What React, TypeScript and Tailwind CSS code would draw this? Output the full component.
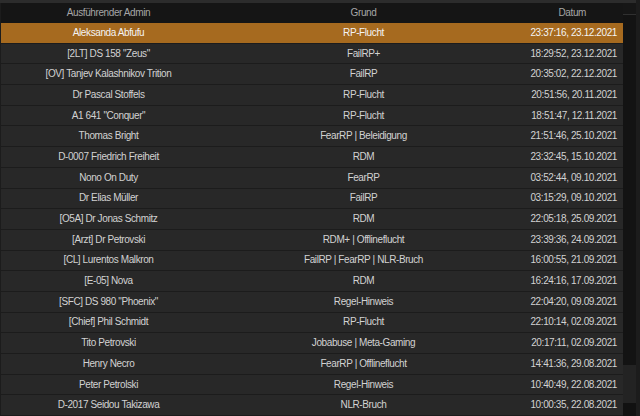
import React from "react";

type Entry = {
  admin: string;
  reason: string;
  date: string;
};

const entries: Entry[] = [
  { admin: "Aleksanda Abfufu", reason: "RP-Flucht", date: "23:37:16, 23.12.2021" },
  { admin: '[2LT] DS 158 "Zeus"', reason: "FailRP+", date: "18:29:52, 23.12.2021" },
  { admin: "[OV] Tanjev Kalashnikov Trition", reason: "FailRP", date: "20:35:02, 22.12.2021" },
  { admin: "Dr Pascal Stoffels", reason: "RP-Flucht", date: "20:51:56, 20.11.2021" },
  { admin: 'A1 641 "Conquer"', reason: "RP-Flucht", date: "18:51:47, 12.11.2021" },
  { admin: "Thomas Bright", reason: "FearRP | Beleidigung", date: "21:51:46, 25.10.2021" },
  { admin: "D-0007 Friedrich Freiheit", reason: "RDM", date: "23:32:45, 15.10.2021" },
  { admin: "Nono On Duty", reason: "FearRP", date: "03:52:44, 09.10.2021" },
  { admin: "Dr Elias Müller", reason: "FailRP", date: "03:15:29, 09.10.2021" },
  { admin: "[O5A] Dr Jonas Schmitz", reason: "RDM", date: "22:05:18, 25.09.2021" },
  { admin: "[Arzt] Dr Petrovski", reason: "RDM+ | Offlineflucht", date: "23:39:36, 24.09.2021" },
  { admin: "[CL] Lurentos Malkron", reason: "FailRP | FearRP | NLR-Bruch", date: "16:00:55, 21.09.2021" },
  { admin: "[E-05] Nova", reason: "RDM", date: "16:24:16, 17.09.2021" },
  { admin: '[SFC] DS 980 "Phoenix"', reason: "Regel-Hinweis", date: "22:04:20, 09.09.2021" },
  { admin: "[Chief] Phil Schmidt", reason: "RP-Flucht", date: "22:10:14, 02.09.2021" },
  { admin: "Tito Petrovski", reason: "Jobabuse | Meta-Gaming", date: "20:17:11, 02.09.2021" },
  { admin: "Henry Necro", reason: "FearRP | Offlineflucht", date: "14:41:36, 29.08.2021" },
  { admin: "Peter Petrolski", reason: "Regel-Hinweis", date: "10:40:49, 22.08.2021" },
  { admin: "D-2017 Seidou Takizawa", reason: "NLR-Bruch", date: "10:00:35, 22.08.2021" },
];

const Row = ({ entry, active }: { entry: Entry; active: boolean }) => (
  <div
    className={`flex h-[20.7px] shrink-0 items-center border-b border-[#1c1c1c] ${
      active ? "bg-[#a66a1f] text-[#f4f4f4]" : "bg-[#282828] text-[#d2d2d2]"
    }`}
  >
    <div className="w-[215px] truncate text-center">{entry.admin}</div>
    <div className="w-[295px] truncate text-center">{entry.reason}</div>
    <div className="flex-1 pr-[6px] text-right">{entry.date}</div>
  </div>
);

const App = () => {
  return (
    <div
      className="flex h-[416px] w-[640px] overflow-hidden bg-[#1c1c1c] text-[10px] leading-none tracking-[-0.4px]"
      style={{ fontFamily: '"Liberation Sans", sans-serif' }}
    >
      <div className="flex w-[636px] flex-col">
        <div className="h-[3px] shrink-0 bg-[#2c2c2c]" />
        <div className="flex flex-1 overflow-hidden">
          <div className="flex w-[623px] flex-col border-l border-[#1c1c1c]">
            <div className="flex h-[20px] shrink-0 items-center bg-[#151515] text-[#a6a6a6]">
              <div className="w-[215px] text-center">Ausführender Admin</div>
              <div className="w-[295px] text-center">Grund</div>
              <div className="flex-1 pr-[37px] text-right">Datum</div>
            </div>
            {entries.map((entry, i) => (
              <Row key={entry.date} entry={entry} active={i === 0} />
            ))}
          </div>

          {/* scrollbar */}
          <div className="flex w-[13px] flex-col">
            <div className="h-[12px] shrink-0 border-b border-[#303030] bg-[#161616]" />
            <div className="h-[350px] shrink-0 bg-[#131313]" />
            <div className="h-[38px] shrink-0 bg-[#232323]" />
            <div className="flex-1 bg-[#111111]" />
          </div>
        </div>
      </div>
      <div className="w-[4px] bg-[#1c1c1c]" />
    </div>
  );
};

export default App;
